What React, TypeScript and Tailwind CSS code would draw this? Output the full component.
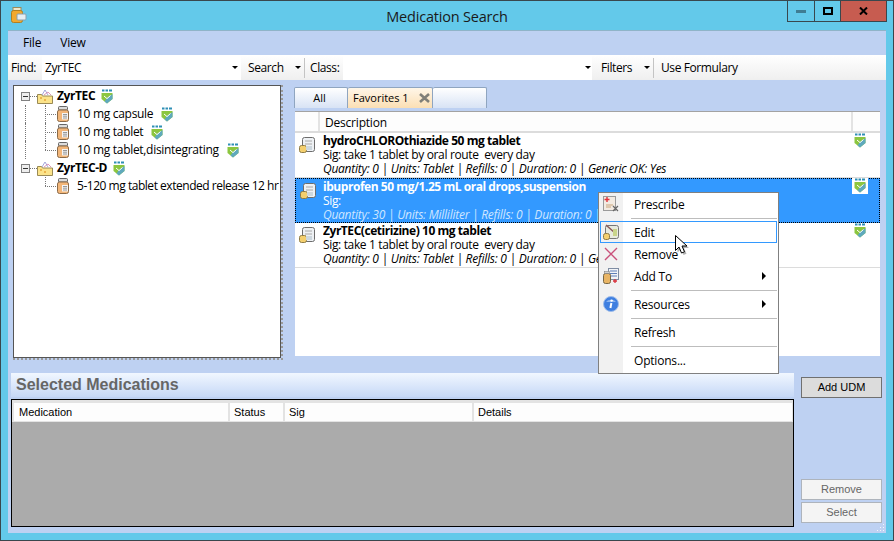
import type { ReactNode } from 'react'

const uiFont = "font-['Open_Sans','Liberation_Sans',sans-serif]"

const Pdr = () => (
  <svg width="12" height="15" viewBox="0 0 12 15" className="shrink-0">
    <path d="M1 1.5h2.5M4.5 1.5H7M8 1.5h3" stroke="#2f8fb5" strokeWidth="2" />
    <path d="M0.5 4h11v6l-5.5 4.5L0.5 10z" fill="#8cc63f" />
    <path d="M6 9l5.5-4v5L6 14.5 3.5 12.4z" fill="#5fa9bd" />
    <path d="M3 7l3 2.6L9.5 6.5" fill="none" stroke="#ffffff" strokeWidth="1" />
  </svg>
)

const Jar = () => (
  <svg width="12" height="16" viewBox="0 0 12 16" className="shrink-0">
    <rect x="1.5" y="0.5" width="9" height="3.5" rx="1" fill="#dcdcdc" stroke="#666666" />
    <rect x="0.5" y="4" width="11" height="11.5" rx="2" fill="#f2b679" stroke="#8a6a48" />
    <rect x="5" y="7" width="6" height="6.5" fill="#f4f4f4" />
    <path d="M6 8.5h4M6 10.2h4M6 12h4" stroke="#808080" strokeWidth="0.8" />
  </svg>
)

const Folder = () => (
  <svg width="16" height="15" viewBox="0 0 16 15" className="shrink-0">
    <path d="M5 6l3-5 3 5" fill="#fff" stroke="#8f8fd0" strokeWidth="0.8" />
    <path d="M7 6l4-3 3 3" fill="none" stroke="#d77fa8" strokeWidth="0.8" />
    <path d="M0.5 5.5h4l1 1.5h10v7.5H0.5z" fill="#fbe38a" stroke="#9a8a55" />
    <path d="M3 9h2M7 11h2" stroke="#e6a53a" strokeWidth="1.5" />
  </svg>
)

const Expander = () => (
  <span className="relative w-[9px] h-[9px] shrink-0 border border-[#808080] bg-[#eeeeee]">
    <span className="absolute left-[1px] top-[3px] w-[5px] h-[1px] bg-[#333333]" />
  </span>
)

const DocPill = () => (
  <svg width="16" height="16" viewBox="0 0 16 16" className="shrink-0">
    <rect x="3.5" y="0.5" width="12" height="14" rx="2" fill="#eef1f4" stroke="#6d6d6d" />
    <path d="M6 4h7M6 7h7M8 10h5" stroke="#a8a8a8" />
    <rect x="0.5" y="8.5" width="7" height="7" rx="2" fill="#f4cf6e" stroke="#8e7b45" />
    <rect x="7" y="9" width="6" height="4" fill="#cdd7de" />
  </svg>
)

const Caret = () => (
  <span className="w-0 h-0 border-x-[3px] border-x-transparent border-t-[3px] border-t-black" />
)

const Sep = () => <span className="block w-[1px] h-[20px] bg-[#c4c4c4]" />

const RxIcon = () => (
  <svg width="16" height="16" viewBox="0 0 16 16">
    <rect x="0.5" y="0.5" width="12" height="14" fill="#f3ebe2" stroke="#9a9a9a" />
    <path d="M4 1v5M1.5 3.5h5" stroke="#e0323c" strokeWidth="1.4" />
    <path d="M3 9h7M3 11h5" stroke="#c9a47a" />
    <path d="M10 10l5 5M15 10l-5 5" stroke="#666666" strokeWidth="1.2" />
  </svg>
)

const EditIcon = () => (
  <svg width="16" height="16" viewBox="0 0 16 16">
    <rect x="2.5" y="1.5" width="13" height="13" rx="2" fill="#e8eadf" stroke="#777777" />
    <path d="M3 1l9 8" stroke="#8a5a5a" strokeWidth="1.5" />
    <rect x="10" y="5" width="4" height="7" fill="#c9d48a" />
    <rect x="0.5" y="9.5" width="6" height="6" rx="2" fill="#f4cf6e" stroke="#8e7b45" />
  </svg>
)

const RemoveIcon = () => (
  <svg width="14" height="14" viewBox="0 0 14 14">
    <path d="M1 1l12 12M13 1L1 13" stroke="#c9507a" strokeWidth="1.4" />
  </svg>
)

const AddToIcon = () => (
  <svg width="16" height="16" viewBox="0 0 16 16">
    <rect x="5.5" y="0.5" width="10" height="11" fill="#f2f4f7" stroke="#7f8da3" />
    <path d="M7 3h7M7 5.5h7M7 8h7" stroke="#5f7fb8" />
    <rect x="0.5" y="5.5" width="7" height="10" rx="2" fill="#e8b464" stroke="#776644" />
    <rect x="1.5" y="3.5" width="5" height="2" fill="#cfcfcf" stroke="#777777" strokeWidth="0.5" />
    <path d="M12 11v4M10 13h4" stroke="#d8313c" strokeWidth="1.3" />
  </svg>
)

const InfoIcon = () => (
  <svg width="16" height="16" viewBox="0 0 16 16">
    <circle cx="8" cy="8" r="7.5" fill="#3f7fe0" stroke="#9fbdea" />
    <path d="M3 6a5.5 4 0 0 1 10 0z" fill="#8db6f0" />
    <circle cx="8.6" cy="4.6" r="1.2" fill="#fff" />
    <path d="M8.4 7L7.4 12" stroke="#fff" strokeWidth="2" />
  </svg>
)

const medRows = [
  {
    title: 'hydroCHLOROthiazide 50 mg tablet',
    sig: 'Sig: take 1 tablet by oral route  every day',
    info: 'Quantity: 0 | Units: Tablet | Refills: 0 | Duration: 0 | Generic OK: Yes',
  },
  {
    title: 'ibuprofen 50 mg/1.25 mL oral drops,suspension',
    sig: 'Sig:',
    info: 'Quantity: 30 | Units: Milliliter | Refills: 0 | Duration: 0 | Generic OK: Yes',
    selected: true,
  },
  {
    title: 'ZyrTEC(cetirizine) 10 mg tablet',
    sig: 'Sig: take 1 tablet by oral route  every day',
    info: 'Quantity: 0 | Units: Tablet | Refills: 0 | Duration: 0 | Generic OK: Yes',
  },
]

const TreeParent = ({ label }: { label: string }) => (
  <div className="flex items-center h-[18px] pl-[7px]">
    <Expander />
    <span className="w-[7px] border-t border-dotted border-[#777777]" />
    <Folder />
    <span className="ml-[4px] text-[12px] font-bold tracking-[-0.4px]">{label}</span>
    <span className="ml-[6px]">
      <Pdr />
    </span>
  </div>
)

const TreeChild = ({ label, rail, last, noPdr }: { label: string; rail?: boolean; last?: boolean; noPdr?: boolean }) => (
  <div className="flex items-center h-[18px] pl-[11px]">
    <span className={`w-[20px] h-full shrink-0 ${rail ? 'border-l border-dotted border-[#777777]' : ''}`} />
    <span className="relative w-[12px] h-full shrink-0">
      <span className={`absolute left-0 top-0 border-l border-dotted border-[#777777] ${last ? 'h-[9px]' : 'h-full'}`} />
      <span className="absolute left-0 top-[9px] w-[11px] border-t border-dotted border-[#777777]" />
    </span>
    <Jar />
    <span className={`ml-[8px] text-[12px] whitespace-nowrap ${noPdr ? 'tracking-[-0.47px]' : 'tracking-[-0.3px]'}`}>{label}</span>
    {!noPdr && (
      <span className="ml-[8px]">
        <Pdr />
      </span>
    )}
  </div>
)

const MenuItem = ({ icon, label, arrow, hover }: { icon?: ReactNode; label: string; arrow?: boolean; hover?: boolean }) => (
  <div className={`flex items-center h-[22px] ${hover ? 'border border-[#3399ff] mx-[1px]' : ''}`}>
    <span className={`flex justify-center ${hover ? 'w-[20px]' : 'w-[24px]'}`}>{icon}</span>
    <span className={`pt-[2px] flex-1 text-[12px] tracking-[-0.2px] ${hover ? 'ml-[13px]' : 'ml-[11px]'}`}>{label}</span>
    {arrow && (
      <span className="mr-[12px] w-0 h-0 border-y-[4px] border-y-transparent border-l-[4px] border-l-black" />
    )}
  </div>
)

const MenuSep = () => (
  <div className="h-[6px] flex items-center pl-[32px] pr-[1px]">
    <span className="w-full h-[1px] bg-[#bdbdbd]" />
  </div>
)

const GridHead = ({ label, w }: { label: string; w: string }) => (
  <div className={`${w} shrink-0 h-full bg-[#fdfdfd] flex items-center pl-[4px] pt-[1px]`}>{label}</div>
)

export default function App() {
  return (
    <div className={`relative w-[894px] h-[541px] overflow-hidden bg-[#63c9ea] border border-[#39474d] text-black ${uiFont} flex flex-col`}>
      {/* title bar */}
      <div className="h-[29px] shrink-0 relative flex items-center justify-center">
        <svg width="16" height="16" viewBox="0 0 16 16" className="absolute left-[10px] top-[6px]">
          <rect x="2" y="0.5" width="8" height="3" fill="#f0e6c8" stroke="#9a8a5a" />
          <rect x="0.5" y="3.5" width="11" height="12" rx="2" fill="#f2a92e" stroke="#b07f22" />
          <rect x="6" y="7" width="9" height="6" rx="1" fill="#e6eef2" stroke="#8aa0ae" />
        </svg>
        <span className="text-[14.5px] tracking-[-0.2px] text-[#1a1a1a] mt-[2px]">Medication Search</span>
        <div className="absolute right-[6px] top-[-1px] h-[22px] flex border border-[#39474d] border-t-0">
          <div className="w-[27px] flex items-center justify-center border-r border-[#39474d]">
            <span className="w-[10px] h-[3px] mt-[2px] bg-[#3f7d93]" />
          </div>
          <div className="w-[26px] flex items-center justify-center border-r border-[#39474d]">
            <span className="w-[10px] h-[8px] border-2 border-black" />
          </div>
          <div className="w-[45px] flex items-center justify-center bg-[#c75c50]">
            <svg width="9" height="8" viewBox="0 0 9 8">
              <path d="M1 0.5l7 7M8 0.5l-7 7" stroke="#000" strokeWidth="2" />
            </svg>
          </div>
        </div>
      </div>

      {/* client area */}
      <div className="relative ml-[7px] mr-[7px] mb-[7px] flex-1 flex flex-col bg-[#bed1f2] border-t border-[#8fb4c8] min-h-0">
        <div className="h-[24px] shrink-0 flex items-center pl-[15px] gap-[19px] text-[12px] tracking-[-0.2px]">
          <span>File</span>
          <span>View</span>
        </div>

        <div className="h-[25px] shrink-0 flex items-center bg-gradient-to-b from-white to-[#efefef] text-[12px] tracking-[-0.4px]">
          <span className="ml-[3px] w-[31px]">Find:</span>
          <div className="w-[199px] h-full bg-white flex items-center justify-between pl-[3px] pr-[3px]">
            <span>ZyrTEC</span>
            <Caret />
          </div>
          <span className="ml-[7px] w-[47px]">Search</span>
          <Caret />
          <span className="ml-[3px] mr-[5px]"><Sep /></span>
          <span className="w-[33px]">Class:</span>
          <div className="w-[249px] h-full bg-white flex items-center justify-end pr-[1px]">
            <Caret />
          </div>
          <span className="ml-[9px] w-[43px]">Filters</span>
          <Caret />
          <span className="ml-[3px] mr-[7px]"><Sep /></span>
          <span>Use Formulary</span>
        </div>

        {/* tree + list */}
        <div className="flex pl-[5px] pt-[5px] h-[293px] shrink-0">
          <div className="w-[270px] h-[275px] border-r-2 border-b-2 border-dotted border-[#9a9a9a]">
            <div className="w-full h-full bg-white border border-[#555555] pt-[1px] overflow-hidden">
              <TreeParent label="ZyrTEC" />
              <TreeChild label="10 mg capsule" rail />
              <TreeChild label="10 mg tablet" rail />
              <TreeChild label="10 mg tablet,disintegrating" rail last />
              <TreeParent label="ZyrTEC-D" />
              <TreeChild label="5-120 mg tablet extended release 12 hr" last noPdr />
            </div>
          </div>

          <div className="ml-[11px] w-[587px] pt-[2px] flex flex-col">
            <div className="h-[21px] flex text-[11px]">
              <div className="w-[54px] flex items-center justify-center pr-[3px] border border-b-0 border-[#8fa5c0] rounded-t-[2px] bg-gradient-to-b from-white to-[#d8e3f5]">
                All
              </div>
              <div className="w-[85px] flex items-center pl-[5px] gap-[10px] border-t border-r border-[#8fa5c0] rounded-t-[2px] bg-gradient-to-b from-[#fff6e8] to-[#fbdfb4]">
                <span>Favorites 1</span>
                <svg width="11" height="10" viewBox="0 0 11 10">
                  <path d="M1 1l9 8M10 1l-9 8" stroke="#807f78" strokeWidth="2.6" />
                </svg>
              </div>
              <div className="w-[54px] border-t border-r border-[#8fa5c0] rounded-t-[2px] bg-gradient-to-b from-white to-[#d8e3f5]" />
            </div>

            <div className="ml-[1px] mt-[3px] w-[585px] h-[245px] bg-white border-t border-[#a3a3a3] flex flex-col text-[12px]">
              <div className="h-[21px] shrink-0 flex bg-[#fdfdfd] border-b-2 border-[#dcdcdc]">
                <div className="w-[25px] border-r-2 border-[#e3e3e3]" />
                <div className="w-[533px] pl-[5px] pt-[3px] flex items-center border-r-2 border-[#e3e3e3] tracking-[-0.2px]">Description</div>
              </div>
              {medRows.map((row) => (
                <div
                  key={row.title}
                  className={`h-[45px] shrink-0 flex ${
                    row.selected
                      ? 'bg-[#3399ff] text-white border border-dotted border-black'
                      : 'border-b border-[#dcdcdc]'
                  }`}
                >
                  <div className={`shrink-0 pl-[4px] pt-[4px] ${row.selected ? 'w-[27px]' : 'w-[28px]'}`}>
                    <DocPill />
                  </div>
                  <div className={`w-[529px] shrink-0 leading-[14px] whitespace-pre overflow-hidden ${row.selected ? 'pt-[1px]' : 'pt-[1px]'}`}>
                    <div className="font-bold tracking-[-0.45px]">{row.title}</div>
                    <div className="tracking-[-0.35px]">{row.sig}</div>
                    <div className={`italic tracking-[-0.25px] ${row.selected ? 'text-[#cfe6ff]' : ''}`}>{row.info}</div>
                  </div>
                  <div className={`h-[16px] px-[2px] flex justify-center ${row.selected ? 'bg-white -mt-[1px]' : ''}`}>
                    <Pdr />
                  </div>
                </div>
              ))}
            </div>
          </div>
        </div>

        {/* selected medications */}
        <div className="flex pl-[3px] flex-1 min-h-0">
          <div className="w-[783px] flex flex-col">
            <div className="h-[24px] shrink-0 flex items-center pl-[5px] bg-gradient-to-b from-[#f1f7ff] to-[#c6d8f6] font-['Liberation_Sans',sans-serif] font-bold text-[16px] text-[#666666]">
              Selected Medications
            </div>
            <div className="mt-[2px] h-[128px] bg-[#ababab] border border-black font-['Liberation_Sans',sans-serif] text-[11px]">
              <div className="h-[22px] flex gap-[2px] bg-[#e3e3e3] pt-[3px] pb-[1px] pl-[2px] pr-[1px]">
                <GridHead label="Medication" w="w-[214px] pl-[5px]" />
                <GridHead label="Status" w="w-[53px]" />
                <GridHead label="Sig" w="w-[187px]" />
                <GridHead label="Details" w="w-[318px]" />
              </div>
            </div>
          </div>
          <div className="ml-[7px] w-[81px] pt-[4px] pb-[10px] flex flex-col font-['Liberation_Sans',sans-serif] text-[11px]">
            <button className="h-[21px] bg-[#dcdcdc] border border-[#707070]">Add UDM</button>
            <button className="mt-auto h-[21px] bg-[#f4f4f4] border border-[#aeb4bc] text-[#666666]">Remove</button>
            <button className="mt-[2px] h-[21px] bg-[#f4f4f4] border border-[#aeb4bc] text-[#666666]">Select</button>
          </div>
        </div>

        <svg width="8" height="8" viewBox="0 0 8 8" className="absolute right-[1px] bottom-[1px]">
          <path d="M6 0h1v1H6zM3 3h1v1H3zM6 3h1v1H6zM0 6h1v1H0zM3 6h1v1H3zM6 6h1v1H6z" fill="#f4f7fb" />
        </svg>
      </div>

      {/* context menu */}
      <div className="absolute left-[597px] top-[191px] w-[181px] h-[182px] bg-white border border-[#808080] text-[12px] text-black">
        <div className="absolute left-0 top-0 bottom-0 w-[24px] bg-[#f1f1f1]" />
        <div className="relative">
          <MenuItem icon={<RxIcon />} label="Prescribe" />
          <MenuSep />
          <MenuItem icon={<EditIcon />} label="Edit" hover />
          <MenuItem icon={<RemoveIcon />} label="Remove" />
          <MenuItem icon={<AddToIcon />} label="Add To" arrow />
          <MenuSep />
          <MenuItem icon={<InfoIcon />} label="Resources" arrow />
          <MenuSep />
          <MenuItem label="Refresh" />
          <MenuSep />
          <MenuItem label="Options..." />
        </div>
      </div>

      {/* mouse pointer */}
      <svg width="16" height="22" viewBox="0 0 16 22" className="absolute left-[674px] top-[234px]">
        <path d="M2.5 2.5v15l3.5-3.5 2.5 6 3-1.2-2.5-5.8h5z" fill="#000" opacity="0.3" />
        <path d="M0.5 0.5v15l3.5-3.5 2.5 6 3-1.2-2.5-5.8h5z" fill="#fff" stroke="#000" />
      </svg>
    </div>
  )
}
